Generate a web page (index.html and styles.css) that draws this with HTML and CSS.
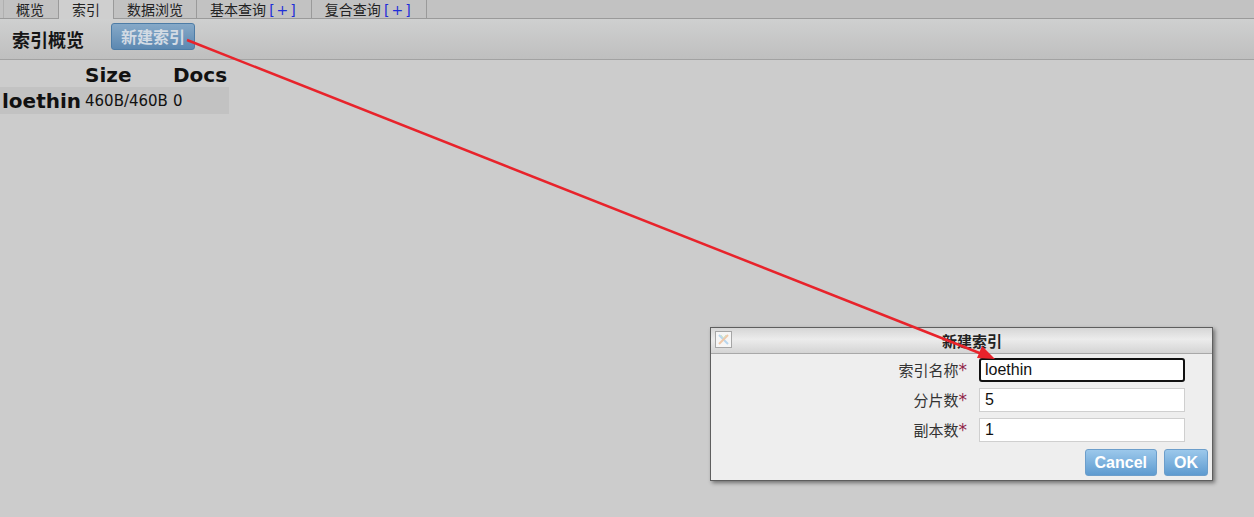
FILE: index.html
```html
<!DOCTYPE html>
<html lang="zh">
<head>
<meta charset="utf-8">
<title>索引</title>
<link rel="stylesheet" href="styles.css">
</head>
<body>
<div class="tabs">
  <div class="tab first">概览</div>
  <div class="tab active">索引</div>
  <div class="tab">数据浏览</div>
  <div class="tab">基本查询 <span class="plus">[+]</span></div>
  <div class="tab">复合查询 <span class="plus">[+]</span></div>
  <div class="tab rest"></div>
</div>
<div class="toolbar">
  <h2 class="title">索引概览</h2>
  <button class="newbtn">新建索引</button>
</div>
<table class="overview">
  <colgroup><col class="c1"><col class="c2"><col class="c3"></colgroup>
  <thead>
    <tr class="head"><th></th><th>Size</th><th>Docs</th></tr>
  </thead>
  <tbody>
    <tr class="row"><td class="name">loethin</td><td>460B/460B</td><td>0</td></tr>
  </tbody>
</table>

<div class="dialog">
  <div class="dlg-title">
    <span class="close"><svg width="15" height="15" viewBox="0 0 15 15"><path d="M3 3 L12 12" stroke="#b9d6ee" stroke-width="2"/><path d="M12 3 L3 12" stroke="#f0c8a8" stroke-width="2"/><path d="M5 3 L7.5 6 L10 3" fill="none" stroke="#cfe4c8" stroke-width="1"/></svg></span>
    <span class="dlg-caption">新建索引</span>
  </div>
  <div class="dlg-body">
    <div class="form">
      <label class="lbl">索引名称<em>*</em></label><div class="inp focus">loethin</div>
      <label class="lbl">分片数<em>*</em></label><div class="inp">5</div>
      <label class="lbl">副本数<em>*</em></label><div class="inp">1</div>
    </div>
    <div class="actions">
      <button class="dbtn">Cancel</button>
      <button class="dbtn">OK</button>
    </div>
  </div>
</div>

<svg class="arrow" width="1254" height="517" viewBox="0 0 1254 517">
  <line x1="187" y1="40" x2="982" y2="354" stroke="#e8232b" stroke-width="2.5"/>
  <polygon points="995,359 977,358 982,346" fill="#e8232b"/>
</svg>
</body>
</html>
```

FILE: styles.css
```css
html, body {
  margin: 0;
  padding: 0;
  background: #cccccc;
  font-family: "DejaVu Sans", "Noto Sans CJK SC", sans-serif;
  color: #111;
}
body {
  width: 1254px;
  height: 517px;
  position: relative;
  overflow: hidden;
}

/* tabs */
.tabs {
  display: flex;
  height: 18px;
  background: #c2c2c2;
  border-bottom: 1px solid #9a9a9a;
}
.tab {
  font-family: "Noto Sans CJK SC", "DejaVu Sans", sans-serif;
  font-size: 14px;
  line-height: 18px;
  padding: 0 13px;
  border-left: 1px solid #9a9a9a;
  color: #222;
  height: 18px;
  box-sizing: border-box;
}
.tab.first {
  border-left: 1px solid #b0b0b0;
  margin-left: 3px;
  padding: 0 14px 0 12px;
}
.tab.active {
  background: #cfcfcf;
  height: 19px;
  margin-bottom: -1px;
}
.tab.rest {
  flex: 1;
  padding: 0;
}
.plus {
  font-family: "DejaVu Sans", sans-serif;
  color: #1f2fd8;
  letter-spacing: 2px;
}

/* toolbar */
.toolbar {
  display: flex;
  align-items: flex-start;
  height: 36px;
  padding: 4px 0 0 12px;
  background: linear-gradient(#cfd0d0, #bfbfbf);
  border-bottom: 1px solid #a2a2a2;
}
.title {
  margin: 3px 0 0 0;
  font-family: "Noto Sans CJK SC", sans-serif;
  font-size: 18px;
  line-height: 27px;
  font-weight: bold;
  color: #151515;
}
.newbtn {
  margin-left: 27px;
  width: 84px;
  height: 27px;
  padding: 0;
  border: 1px solid #4d7ca6;
  border-radius: 3px;
  background: linear-gradient(#86a9c8, #5c88b1);
  color: #d3dbe4;
  font-family: "Noto Sans CJK SC", sans-serif;
  font-size: 16px;
  font-weight: bold;
  line-height: 25px;
}

/* overview table */
.overview {
  border-collapse: collapse;
  table-layout: fixed;
  width: 229px;
  margin-top: 3px;
}
.c1 { width: 83px; }
.c2 { width: 88px; }
.c3 { width: 58px; }
.overview th {
  font-size: 20px;
  font-weight: bold;
  line-height: 24px;
  height: 24px;
  padding: 0 0 0 2px;
  text-align: left;
  white-space: nowrap;
}
.overview td {
  padding: 0 0 0 2px;
  height: 26px;
  font-size: 15px;
  white-space: nowrap;
  vertical-align: middle;
}
.row {
  background: #c2c2c2;
}
.overview td.name {
  font-size: 20px;
  font-weight: bold;
  padding-top: 1px;
}

/* dialog */
.dialog {
  position: absolute;
  left: 710px;
  top: 327px;
  width: 503px;
  height: 154px;
  box-sizing: border-box;
  border: 1px solid #5e5e5e;
  background: #eeeeee;
  box-shadow: 2px 2px 4px rgba(0, 0, 0, 0.45);
  display: flex;
  flex-direction: column;
}
.dlg-title {
  display: flex;
  align-items: flex-start;
  height: 26px;
  box-sizing: border-box;
  border-bottom: 1px solid #a8a8a8;
  background: linear-gradient(#d6d6d6, #ececec 45%, #d4d4d4);
}
.close {
  display: flex;
  align-items: center;
  justify-content: center;
  width: 17px;
  height: 17px;
  box-sizing: border-box;
  margin: 3px 0 0 4px;
  border: 1px solid #a6a6a6;
  background: #f6f6f6;
}
.dlg-caption {
  flex: 1;
  text-align: center;
  padding-left: 0;
  font-family: "Noto Sans CJK SC", sans-serif;
  font-size: 15px;
  font-weight: bold;
  line-height: 25px;
  color: #222;
}
.dlg-body {
  flex: 1;
  padding: 4px 4px 0 0;
}
.form {
  display: grid;
  grid-template-columns: 1fr 206px;
  grid-auto-rows: 24px;
  column-gap: 12px;
  row-gap: 6px;
  padding-right: 23px;
}
.lbl {
  text-align: right;
  font-family: "Noto Sans CJK SC", sans-serif;
  font-size: 15px;
  line-height: 24px;
  height: 24px;
  color: #333;
}
.lbl em {
  font-style: normal;
  color: #8f2347;
  font-family: "DejaVu Sans", sans-serif;
  font-size: 17px;
  line-height: 20px;
}
.inp {
  height: 24px;
  box-sizing: border-box;
  border: 1px solid #cfcfcf;
  background: #ffffff;
  font-family: "Liberation Sans", Arial, sans-serif;
  font-size: 16px;
  line-height: 22px;
  padding: 0 0 0 5px;
  color: #111;
}
.inp.focus {
  border: 2px solid #111;
  border-radius: 3px;
  padding: 0 0 0 4px;
  line-height: 20px;
}
.actions {
  display: flex;
  justify-content: flex-end;
  gap: 7px;
  margin-top: 7px;
}
.dbtn {
  height: 27px;
  padding: 0 9px;
  border: 1px solid #6c9ecb;
  border-radius: 3px;
  background: linear-gradient(#9cc8eb, #5e9bd0);
  color: #ffffff;
  font-family: "Liberation Sans", Arial, sans-serif;
  font-size: 16px;
  font-weight: bold;
  line-height: 25px;
}

/* annotation arrow */
.arrow {
  position: absolute;
  left: 0;
  top: 0;
  pointer-events: none;
}
```
